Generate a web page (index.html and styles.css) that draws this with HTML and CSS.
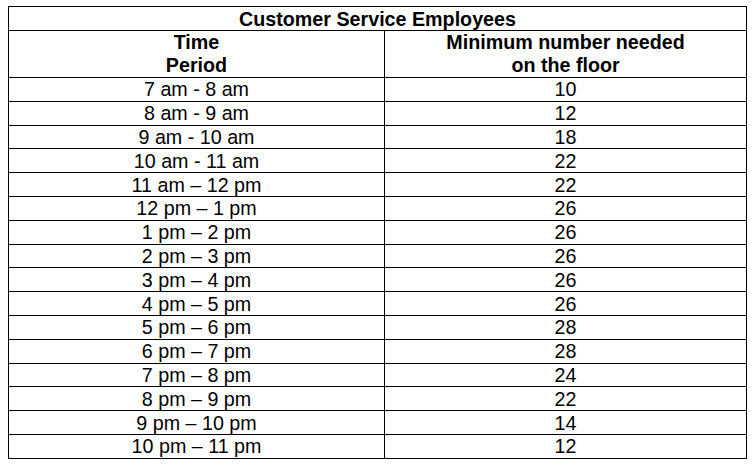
FILE: index.html
```html
<!DOCTYPE html>
<html>
<head>
<meta charset="utf-8">
<link rel="stylesheet" href="styles.css">
</head>
<body>
<table class="sched">
  <colgroup><col class="c1"><col class="c2"></colgroup>
  <tr class="title-row"><th colspan="2">Customer Service Employees</th></tr>
  <tr class="head-row"><th>Time<br>Period</th><th>Minimum number needed<br>on the floor</th></tr>
  <tr><td>7 am - 8 am</td><td>10</td></tr>
  <tr><td>8 am - 9 am</td><td>12</td></tr>
  <tr><td>9 am - 10 am</td><td>18</td></tr>
  <tr><td>10 am - 11 am</td><td>22</td></tr>
  <tr><td>11 am – 12 pm</td><td>22</td></tr>
  <tr><td>12 pm – 1 pm</td><td>26</td></tr>
  <tr><td>1 pm – 2 pm</td><td>26</td></tr>
  <tr><td>2 pm – 3 pm</td><td>26</td></tr>
  <tr><td>3 pm – 4 pm</td><td>26</td></tr>
  <tr><td>4 pm – 5 pm</td><td>26</td></tr>
  <tr><td>5 pm – 6 pm</td><td>28</td></tr>
  <tr><td>6 pm – 7 pm</td><td>28</td></tr>
  <tr><td>7 pm – 8 pm</td><td>24</td></tr>
  <tr><td>8 pm – 9 pm</td><td>22</td></tr>
  <tr><td>9 pm – 10 pm</td><td>14</td></tr>
  <tr><td>10 pm – 11 pm</td><td>12</td></tr>
</table>
</body>
</html>
```
FILE: styles.css
```css
html, body {
  background: #fff;
}
body {
  margin: 6px 0 0 8px;
  font-family: "Liberation Sans", Arial, sans-serif;
  font-size: 19.7px;
  color: #000;
}
.sched {
  border-collapse: collapse;
  width: 738px;
  table-layout: fixed;
}
.sched th, .sched td {
  border: 1px solid #000;
  padding: 0;
  text-align: center;
  vertical-align: middle;
  line-height: 22px;
}
.sched td {
  height: 22.8px;
}
.sched th {
  font-weight: bold;
}
.title-row th {
  height: 23px;
}
.head-row th {
  height: 46px;
  line-height: 23px;
}
.c1 {
  width: 376px;
}
.c2 {
  width: 362px;
}
```
